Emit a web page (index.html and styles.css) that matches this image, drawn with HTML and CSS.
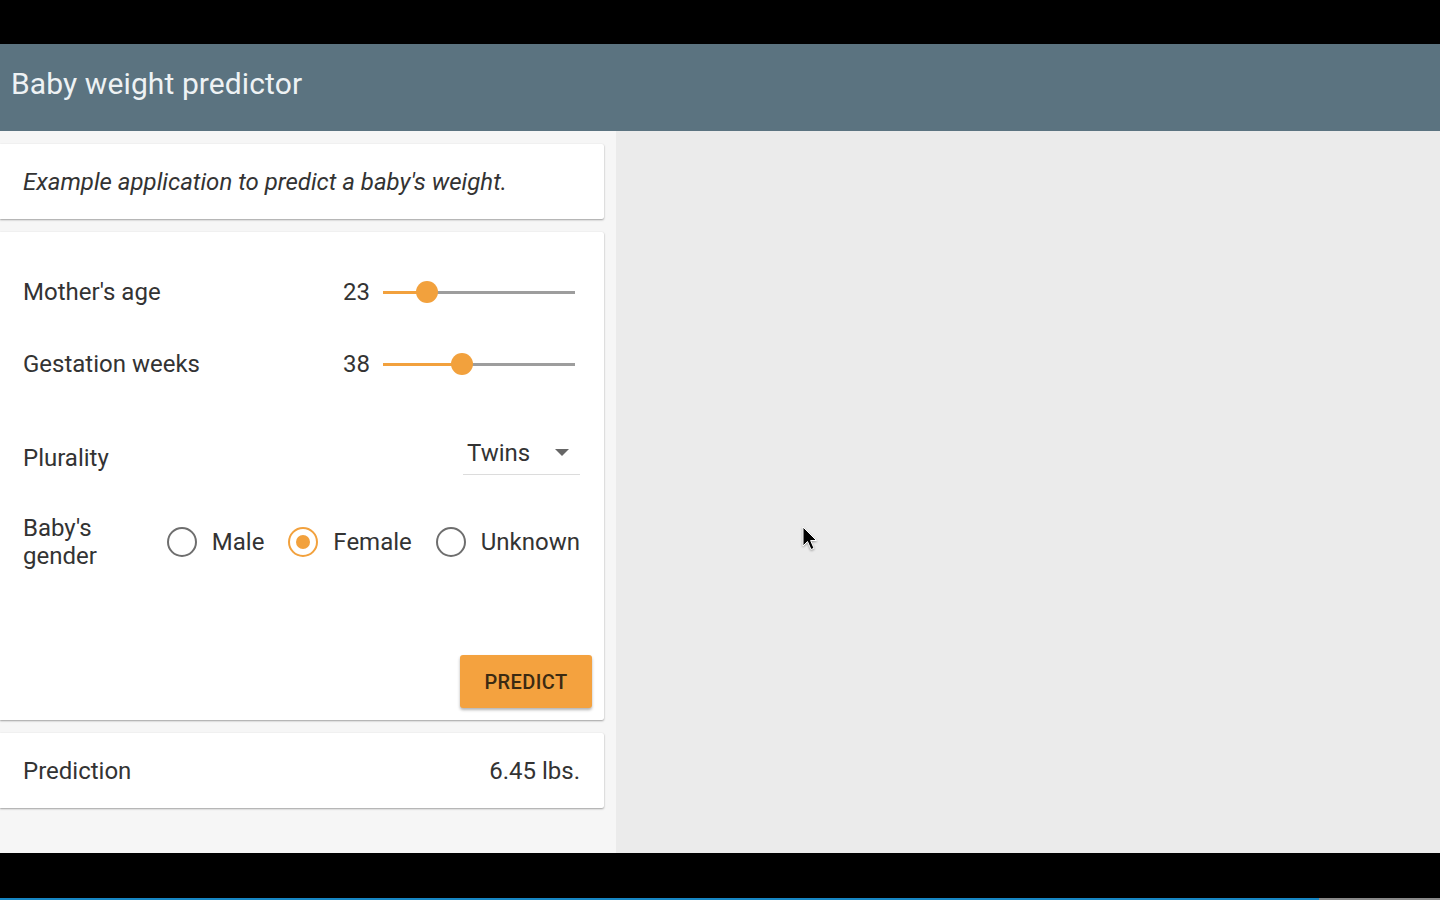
FILE: index.html
```html
<!DOCTYPE html>
<html>
<head>
<meta charset="utf-8">
<title>Baby weight predictor</title>
<link rel="stylesheet" href="styles.css">
</head>
<body>
<div class="topbar"></div>
<div class="app">
  <header class="appbar"><h1 class="title">Baby weight predictor</h1></header>
  <main class="main">
    <section class="left">
      <div class="card intro"><p class="intro-text">Example application to predict a baby's weight.</p></div>
      <div class="card form">
        <div class="row slider-row first">
          <span class="label">Mother's age</span>
          <span class="value">23</span>
          <div class="track">
            <div class="track-fill" style="width:44px"></div>
            <div class="thumb" style="left:44px"></div>
          </div>
        </div>
        <div class="row slider-row">
          <span class="label">Gestation weeks</span>
          <span class="value">38</span>
          <div class="track">
            <div class="track-fill" style="width:79px"></div>
            <div class="thumb" style="left:79px"></div>
          </div>
        </div>
        <div class="row select-row">
          <span class="label">Plurality</span>
          <div class="select">
            <span class="select-text">Twins</span>
            <span class="caret"></span>
          </div>
        </div>
        <div class="row gender-row">
          <span class="label gender-label">Baby's<br>gender</span>
          <div class="radios">
            <label class="radio"><span class="circle"></span><span class="radio-text">Male</span></label>
            <label class="radio checked"><span class="circle"><span class="dot"></span></span><span class="radio-text">Female</span></label>
            <label class="radio"><span class="circle"></span><span class="radio-text">Unknown</span></label>
          </div>
        </div>
        <div class="actions"><button class="predict">PREDICT</button></div>
      </div>
      <div class="card result">
        <span class="label">Prediction</span>
        <span class="result-value">6.45 lbs.</span>
      </div>
    </section>
    <section class="right">
      <svg class="cursor" width="16" height="26" viewBox="0 0 16 26"><path d="M1 1 L1 20 L5.5 15.5 L9 23.5 L12 22.2 L8.6 14.5 L14.5 14.5 Z" fill="#000" stroke="#fff" stroke-width="1" stroke-linejoin="round"/></svg>
    </section>
  </main>
</div>
<div class="bottombar"><div class="progress"><div class="progress-done"></div></div></div>
</body>
</html>
```

FILE: styles.css
```css
* { box-sizing: border-box; }
html, body { margin: 0; padding: 0; }
body {
  background: #000;
  font-family: Roboto, "Liberation Sans", sans-serif;
  color: #333;
  width: 1440px;
  height: 900px;
  overflow: hidden;
}
.topbar { height: 44px; background: #000; }
.app { height: 809px; display: flex; flex-direction: column; }
.appbar {
  height: 87px;
  background: #5b7380;
  display: flex;
  align-items: center;
  padding: 0 0 8px 11px;
  flex: none;
}
.title {
  margin: 0;
  font-weight: 400;
  font-size: 30px;
  color: #eef2f4;
  letter-spacing: 0.1px;
}
.main { flex: 1; display: flex; }
.left {
  width: 616px;
  background: #f6f6f6;
  padding: 13px 12px 0 0;
  display: flex;
  flex-direction: column;
  gap: 13px;
}
.right { flex: 1; background: #ebebeb; position: relative; }
.cursor { position: absolute; left: 186px; top: 395px; filter: drop-shadow(0 1px 1px rgba(0,0,0,0.35)); }
.card {
  background: #fff;
  border-radius: 0 2px 2px 0;
  box-shadow: 0 1px 2px rgba(0,0,0,0.35), 0 0 1px rgba(0,0,0,0.08);
}
.intro { height: 75px; display: flex; align-items: center; padding-left: 23px; }
.intro-text { margin: 0; font-style: italic; font-size: 24px; color: #333; }
.label { font-size: 24px; color: #333; }
.form {
  height: 488px;
  padding: 36px 24px 0 23px;
  display: flex;
  flex-direction: column;
}
.row { display: flex; align-items: center; }
.slider-row { height: 48px; }
.slider-row + .slider-row { margin-top: 24px; }
.slider-row .label { flex: 1; }
.value { font-size: 24px; color: #333; }
.track {
  position: relative;
  width: 192px;
  height: 3px;
  background: #9d9d9d;
  margin: 0 5px 0 13px;
}
.track-fill { position: absolute; left: 0; top: 0; height: 3px; background: #f2a13d; }
.thumb {
  position: absolute;
  top: 1.5px;
  width: 22px;
  height: 22px;
  margin: -11px 0 0 -11px;
  border-radius: 50%;
  background: #f2a13d;
}
.select-row { margin-top: 45px; height: 48px; justify-content: space-between; }
.select-row .label { margin-top: 2px; }
.select {
  width: 117px;
  height: 40px;
  border-bottom: 1px solid #dcdcdc;
  display: flex;
  align-items: center;
  justify-content: space-between;
  padding: 0 11px 4px 4px;
  margin-top: -4px;
}
.select-text { font-size: 24px; color: #333; }
.caret {
  width: 0; height: 0;
  border-left: 7px solid transparent;
  border-right: 7px solid transparent;
  border-top: 7px solid #666;
}
.gender-row { margin-top: 33px; justify-content: space-between; }
.gender-label { line-height: 28px; }
.radios { display: flex; align-items: center; gap: 24px; }
.radio { display: flex; align-items: center; gap: 15px; }
.circle {
  width: 30px; height: 30px;
  border: 2.5px solid #6e6e6e;
  border-radius: 50%;
  display: flex;
  align-items: center;
  justify-content: center;
}
.radio.checked .circle { border-color: #f2a13d; }
.dot { width: 14px; height: 14px; border-radius: 50%; background: #f2a13d; }
.radio-text { font-size: 24px; color: #333; }
.actions { margin-top: auto; margin-bottom: 12px; display: flex; justify-content: flex-end; margin-right: -12px; }
.predict {
  width: 132px;
  height: 53px;
  background: #f4a23f;
  border: none;
  border-radius: 3px;
  box-shadow: 0 2px 3px rgba(0,0,0,0.3);
  font-family: Roboto, "Liberation Sans", sans-serif;
  font-weight: 500;
  font-size: 20px;
  color: #3b2a12;
  letter-spacing: 0.4px;
}
.result {
  height: 75px;
  padding: 0 24px 0 23px;
  display: flex;
  align-items: center;
  justify-content: space-between;
}
.result-value { font-size: 24px; color: #333; }
.bottombar { height: 47px; background: #000; position: relative; }
.progress { position: absolute; left: 0; right: 0; bottom: 0; height: 2px; background: #8a8a8a; }
.progress-done { width: 1319px; height: 2px; background: #1787c4; }
```
